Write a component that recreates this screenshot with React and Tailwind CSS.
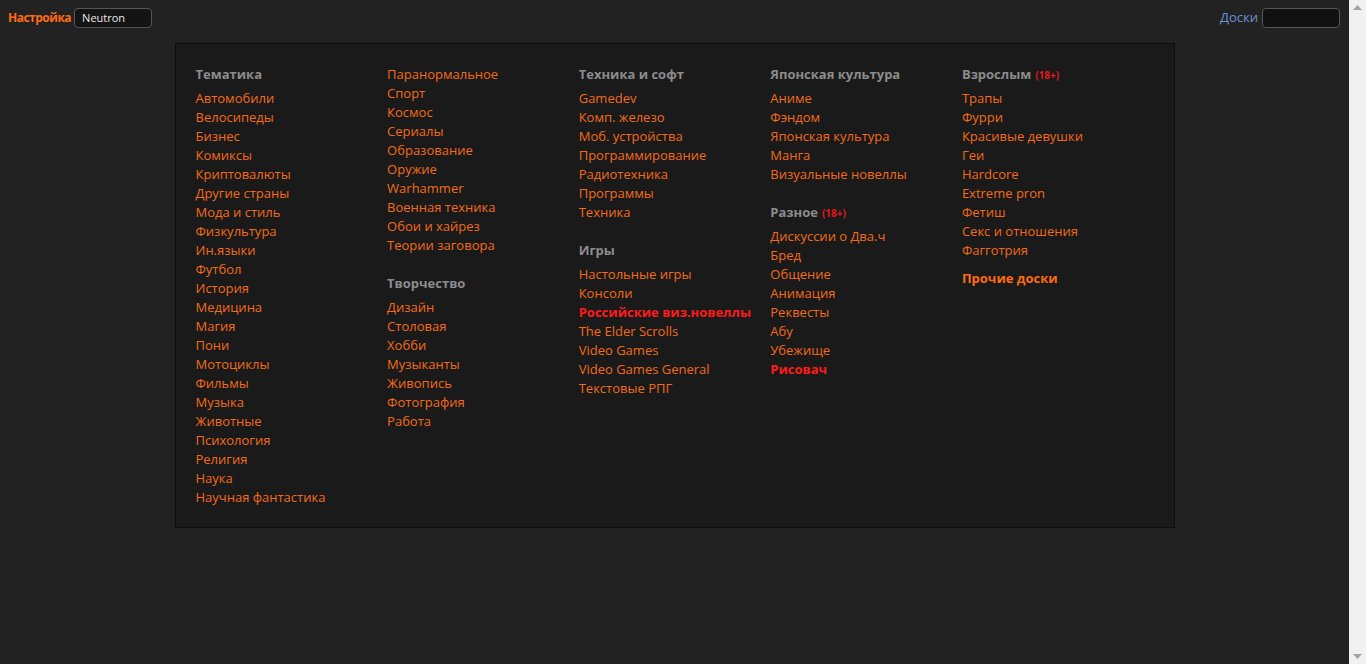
import React from "react";

const O = "text-[#f26a1b]";

function Item({ children, red }) {
  return (
    <div className={"h-[19px] leading-[19px] whitespace-nowrap " + (red ? "text-[#ff1a1a] font-bold" : O)}>
      {children}
    </div>
  );
}

function Head({ children, adult, first }) {
  return (
    <div className={"h-[24px] leading-[19px] font-bold text-[#8c8c8c] whitespace-nowrap " + (first ? "" : "mt-[19px]")}>
      {children}
      {adult && <span className="ml-[4px] text-[10px] text-[#e0161a]">(18+)</span>}
    </div>
  );
}

function Group({ title, items, adult, first, red = [] }) {
  return (
    <div>
      {title && <Head adult={adult} first={first}>{title}</Head>}
      {items.map((t) => (
        <Item key={t} red={red.includes(t)}>{t}</Item>
      ))}
    </div>
  );
}

function Scrollbar() {
  return (
    <div className="flex h-screen w-[17px] shrink-0 flex-col items-center justify-between bg-[#f1f1f1] py-[5px]">
      <svg width="9" height="5" viewBox="0 0 9 5">
        <path d="M0 5 L4.5 0 L9 5 Z" fill="#a3a3a3" />
      </svg>
      <svg width="9" height="5" viewBox="0 0 9 5">
        <path d="M0 0 L4.5 5 L9 0 Z" fill="#a3a3a3" />
      </svg>
    </div>
  );
}

export default function App() {
  return (
    <div
      className="flex h-screen overflow-hidden bg-[#222222] text-[13px]"
      style={{ fontFamily: '"Open Sans", "Noto Sans", sans-serif' }}
    >
      <div className="h-screen flex-1">
        <div className="flex items-center justify-between pl-[8px] pr-[9px] pt-[8px]">
          <div className="flex items-center gap-[3px]">
            <span className="font-bold text-[#ff6a13] text-[12px] tracking-[-0.5px]">Настройка</span>
            <div className="h-[20px] w-[78px] rounded-[4px] border border-[#555] bg-[#141414] pl-[7px] text-[11px] leading-[18px] text-[#e8e8e8]">
              Neutron
            </div>
          </div>
          <div className="flex items-center gap-[4px]">
            <span className="text-[#6e8fd6] text-[13px]">Доски</span>
            <div className="h-[20px] w-[78px] rounded-[4px] border border-[#555] bg-[#111]" />
          </div>
        </div>
        <div className="mx-auto mt-[15px] w-[1000px] border border-[#0d0d0d] bg-[#1a1a1a] px-[20px] pt-[21px] pb-[20px]">
          <div className="grid grid-cols-5">
            <div>
              <Group
                first
                title="Тематика"
                items={[
                  "Автомобили","Велосипеды","Бизнес","Комиксы","Криптовалюты","Другие страны","Мода и стиль","Физкультура","Ин.языки","Футбол","История","Медицина","Магия","Пони","Мотоциклы","Фильмы","Музыка","Животные","Психология","Религия","Наука","Научная фантастика",
                ]}
              />
            </div>
            <div>
              <Group
                items={["Паранормальное","Спорт","Космос","Сериалы","Образование","Оружие","Warhammer","Военная техника","Обои и хайрез","Теории заговора"]}
              />
              <Group
                title="Творчество"
                items={["Дизайн","Столовая","Хобби","Музыканты","Живопись","Фотография","Работа"]}
              />
            </div>
            <div>
              <Group
                first
                title="Техника и софт"
                items={["Gamedev","Комп. железо","Моб. устройства","Программирование","Радиотехника","Программы","Техника"]}
              />
              <Group
                title="Игры"
                red={["Российские виз.новеллы"]}
                items={["Настольные игры","Консоли","Российские виз.новеллы","The Elder Scrolls","Video Games","Video Games General","Текстовые РПГ"]}
              />
            </div>
            <div>
              <Group
                first
                title="Японская культура"
                items={["Аниме","Фэндом","Японская культура","Манга","Визуальные новеллы"]}
              />
              <Group
                title="Разное"
                adult
                red={["Рисовач"]}
                items={["Дискуссии о Два.ч","Бред","Общение","Анимация","Реквесты","Абу","Убежище","Рисовач"]}
              />
            </div>
            <div>
              <Group
                first
                title="Взрослым"
                adult
                items={["Трапы","Фурри","Красивые девушки","Геи","Hardcore","Extreme pron","Фетиш","Секс и отношения","Фагготрия"]}
              />
              <div className="mt-[9px] font-bold text-[13px] leading-[19px] text-[#ff6a13]">Прочие доски</div>
            </div>
          </div>
        </div>
      </div>
      <Scrollbar />
    </div>
  );
}
